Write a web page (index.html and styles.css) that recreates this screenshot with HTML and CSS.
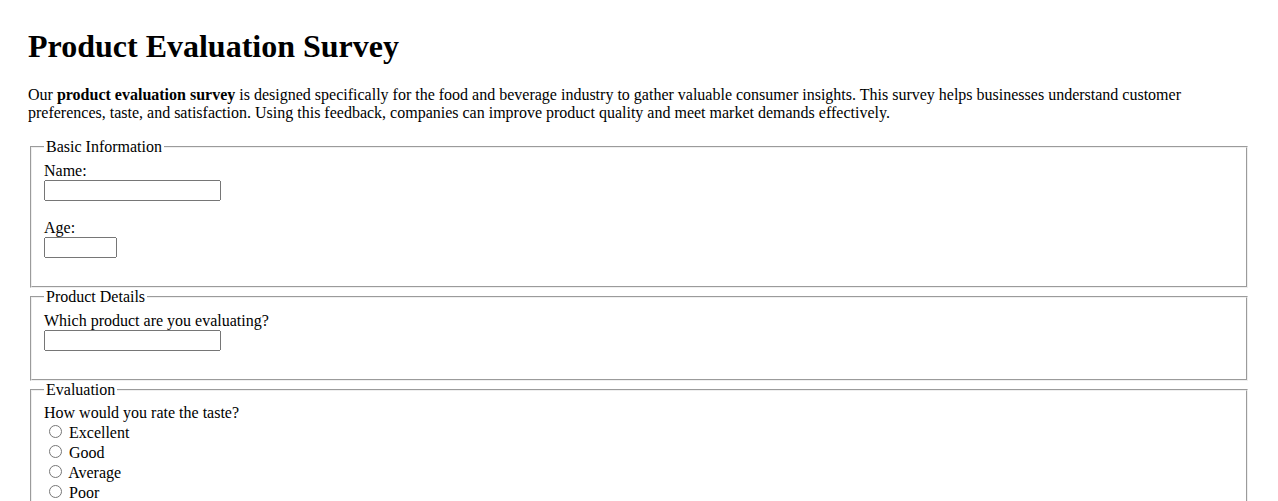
FILE: index.html
```html
<!DOCTYPE html>
<html lang="en">
<head>
  <meta charset="UTF-8">
  <title>Product Evaluation Survey</title>
  <link rel="stylesheet" href="styles.css">
</head>
<body>

  <h1>Product Evaluation Survey</h1>

  <p>Our <strong>product evaluation survey</strong> is designed specifically for the food and beverage industry to gather valuable consumer insights. This survey helps businesses understand customer preferences, taste, and satisfaction. Using this feedback, companies can improve product quality and meet market demands effectively.</p>

  <form>
    <fieldset>
      <legend>Basic Information</legend>
      <label for="name">Name:</label><br>
      <input type="text" id="name" name="name" class="text-input"><br><br>

      <label for="age">Age:</label><br>
      <input type="number" id="age" name="age" class="age-input"><br><br>
    </fieldset>

    <fieldset>
      <legend>Product Details</legend>
      <label for="product">Which product are you evaluating?</label><br>
      <input type="text" id="product" name="product" class="text-input"><br><br>
    </fieldset>

    <fieldset>
      <legend>Evaluation</legend>
      <label>How would you rate the taste?</label><br>
      <input type="radio" id="excellent" name="taste" value="excellent"> <label for="excellent">Excellent</label><br>
      <input type="radio" id="good" name="taste" value="good"> <label for="good">Good</label><br>
      <input type="radio" id="average" name="taste" value="average"> <label for="average">Average</label><br>
      <input type="radio" id="poor" name="taste" value="poor"> <label for="poor">Poor</label><br>
    </fieldset>
  </form>

</body>
</html>
```

FILE: styles.css
```css
body {
  margin: 28px;
  font-family: "Liberation Serif", "Times New Roman", serif;
  color: #000;
  background-color: #fff;
}

h1 {
  font-size: 2em;
  margin: 0 0 0.67em;
}

.text-input {
  width: 177px;
  box-sizing: border-box;
}

.age-input {
  width: 73px;
  box-sizing: border-box;
}
```
